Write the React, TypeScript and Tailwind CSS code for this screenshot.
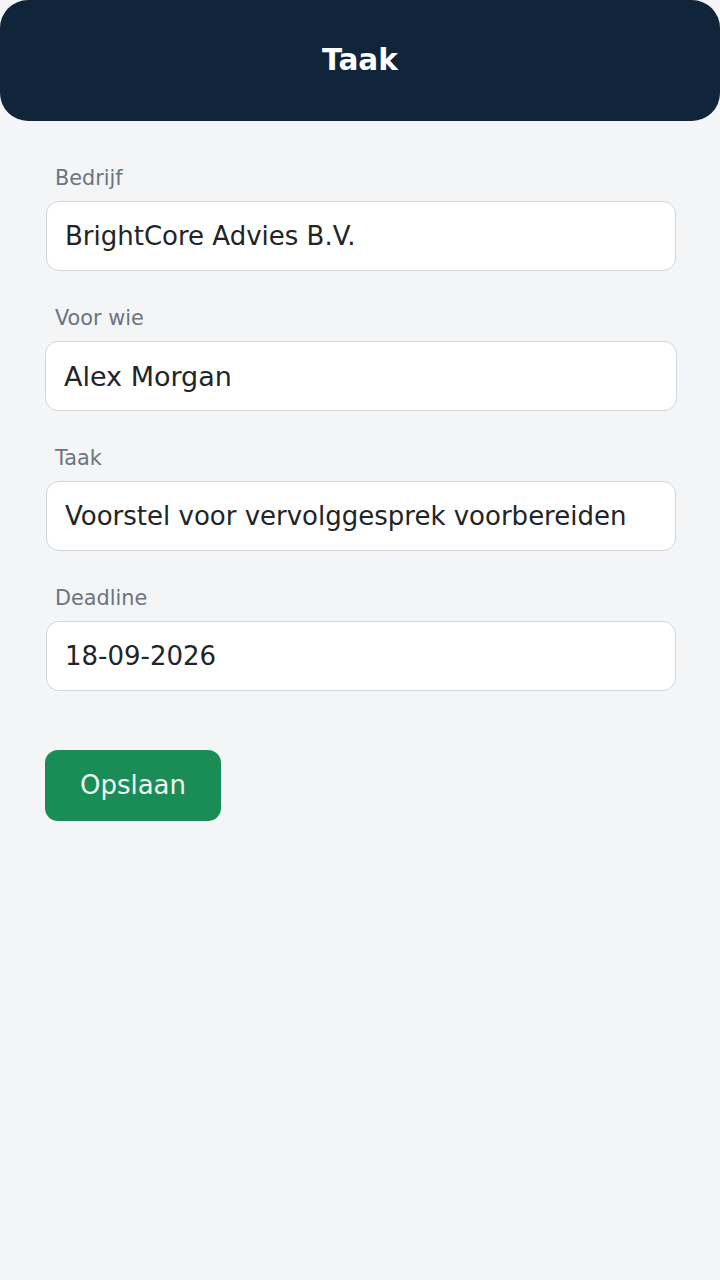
import { useState } from "react";

type Field = { key: string; label: string; value: string; wide?: boolean };

const initialFields: Field[] = [
  { key: "bedrijf", label: "Bedrijf", value: "BrightCore Advies B.V." },
  { key: "voorWie", label: "Voor wie", value: "Alex Morgan", wide: true },
  { key: "taak", label: "Taak", value: "Voorstel voor vervolggesprek voorbereiden" },
  { key: "deadline", label: "Deadline", value: "18-09-2026" },
];

export default function App() {
  const [fields, setFields] = useState<Field[]>(initialFields);

  const update = (key: string, value: string) =>
    setFields((fs) => fs.map((f) => (f.key === key ? { ...f, value } : f)));

  return (
    <div className="min-h-[1280px] w-full bg-[#f3f5f7] font-['DejaVu_Sans',sans-serif]">
      <header className="h-[121px] rounded-[28px] bg-[#11253a] flex items-center justify-center">
        <h1 className="text-[29.5px] font-bold text-white leading-none">Taak</h1>
      </header>

      <form
        className="pl-[46px] pr-[44px] pt-[44px] flex flex-col"
        onSubmit={(e) => e.preventDefault()}
      >
        {fields.map((f) => (
          <label key={f.key} className="flex flex-col mb-[34px]">
            <span className="pl-[9px] mb-[10px] text-[20.8px] leading-[26px] text-[#6b7480]">
              {f.label}
            </span>
            {/* "Voor wie" staat in de referentie net iets breder en groter */}
            <input
              value={f.value}
              onChange={(e) => update(f.key, e.target.value)}
              className={`h-[70px] rounded-[13px] border-[1.5px] border-[#d1d5db] bg-white pr-4 text-[#222427] outline-none font-['DejaVu_Sans',sans-serif] ${
                f.wide
                  ? "-ml-px w-[calc(100%+2px)] pl-[18px] text-[27px]"
                  : "w-full pl-[18px] text-[26px]"
              }`}
            />
          </label>
        ))}

        <div className="pt-[25px] -ml-px">
          <button
            type="submit"
            className="h-[71px] w-[176px] rounded-[13px] bg-[#1a8c55] text-[26px] text-[#eef8f2] font-['DejaVu_Sans',sans-serif]"
          >
            Opslaan
          </button>
        </div>
      </form>
    </div>
  );
}
